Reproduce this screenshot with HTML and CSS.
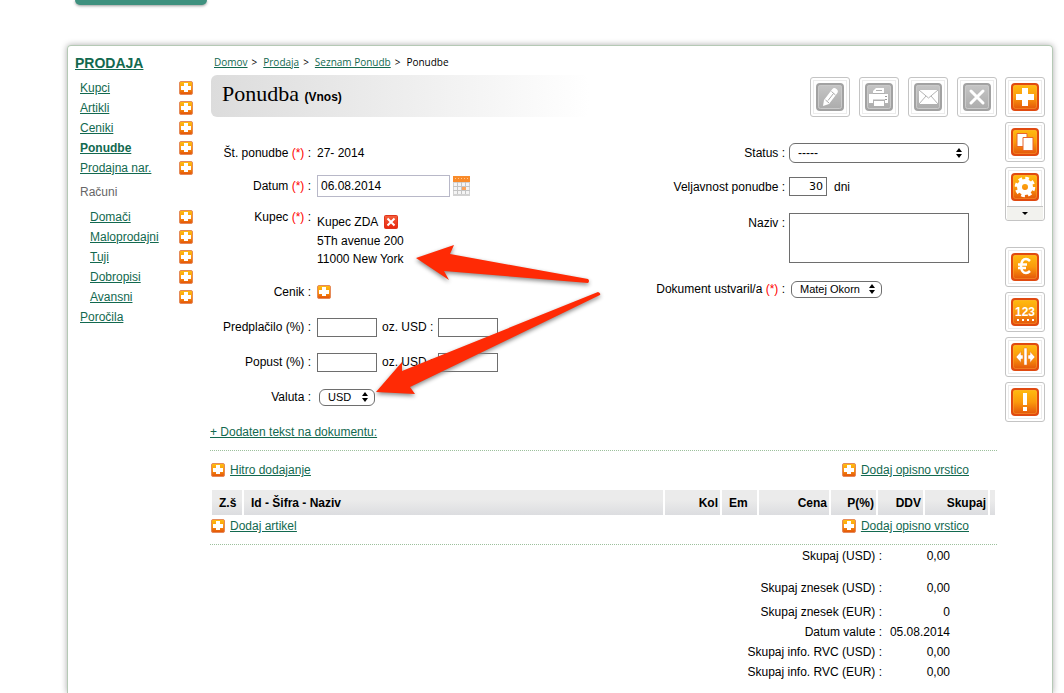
FILE: index.html
```html
<!DOCTYPE html>
<html lang="sl">
<head>
  <meta charset="UTF-8">
  <title>Ponudba (Vnos)</title>
  <link rel="stylesheet" href="styles.css">
</head>
<body>

  <!-- shared icons -->
  <svg class="defs" width="0" height="0" aria-hidden="true">
    <defs>
      <linearGradient id="orange" x1="0" y1="0" x2="0" y2="1">
        <stop offset="0" stop-color="#ffbe10"/>
        <stop offset="0.5" stop-color="#fb9a0c"/>
        <stop offset="1" stop-color="#e2500a"/>
      </linearGradient>
      <linearGradient id="gray" x1="0" y1="0" x2="0" y2="1">
        <stop offset="0" stop-color="#c6c6c6"/>
        <stop offset="1" stop-color="#ababab"/>
      </linearGradient>
      <linearGradient id="red" x1="0" y1="0" x2="0" y2="1">
        <stop offset="0" stop-color="#f4603c"/>
        <stop offset="1" stop-color="#e8260c"/>
      </linearGradient>
    </defs>
    <symbol id="plus" viewBox="0 0 14 14">
      <rect x="0.5" y="0.5" width="13" height="13" rx="1.5" fill="url(#orange)" stroke="#e58a5a"/>
      <path d="M5 2h4v3h3v4H9v2H5V9H2V5h3z" fill="#fff"/>
    </symbol>
    <symbol id="tile" viewBox="0 0 28 28">
      <rect x="1" y="1" width="26" height="26" rx="3" fill="url(#orange)" stroke="#e04a10" stroke-width="2"/>
      <rect x="2.5" y="2.5" width="23" height="23" rx="2" fill="none" stroke="#ffae3c" stroke-opacity="0.4"/>
    </symbol>
    <symbol id="tile-gray" viewBox="0 0 28 28">
      <rect x="1" y="1" width="26" height="26" rx="3" fill="url(#gray)" stroke="#a2a2a2" stroke-width="2"/>
      <rect x="2.5" y="2.5" width="23" height="23" rx="2" fill="none" stroke="#cacaca"/>
    </symbol>
  </svg>

  <div class="top-tab"></div>

  <div class="card">

    <nav class="sidebar">
      <h2><a href="#">PRODAJA</a></h2>
      <ul>
        <li><a href="#">Kupci</a><a href="#" class="add" aria-label="Dodaj"><svg class="plus"><use href="#plus"/></svg></a></li>
        <li><a href="#">Artikli</a><a href="#" class="add" aria-label="Dodaj"><svg class="plus"><use href="#plus"/></svg></a></li>
        <li><a href="#">Ceniki</a><a href="#" class="add" aria-label="Dodaj"><svg class="plus"><use href="#plus"/></svg></a></li>
        <li><a href="#" class="active">Ponudbe</a><a href="#" class="add" aria-label="Dodaj"><svg class="plus"><use href="#plus"/></svg></a></li>
        <li><a href="#">Prodajna nar.</a><a href="#" class="add" aria-label="Dodaj"><svg class="plus"><use href="#plus"/></svg></a></li>
      </ul>
      <h3>Računi</h3>
      <ul class="sub">
        <li><a href="#">Domači</a><a href="#" class="add" aria-label="Dodaj"><svg class="plus"><use href="#plus"/></svg></a></li>
        <li><a href="#">Maloprodajni</a><a href="#" class="add" aria-label="Dodaj"><svg class="plus"><use href="#plus"/></svg></a></li>
        <li><a href="#">Tuji</a><a href="#" class="add" aria-label="Dodaj"><svg class="plus"><use href="#plus"/></svg></a></li>
        <li><a href="#">Dobropisi</a><a href="#" class="add" aria-label="Dodaj"><svg class="plus"><use href="#plus"/></svg></a></li>
        <li><a href="#">Avansni</a><a href="#" class="add" aria-label="Dodaj"><svg class="plus"><use href="#plus"/></svg></a></li>
      </ul>
      <ul>
        <li><a href="#">Poročila</a></li>
      </ul>
    </nav>

    <main>
      <div class="breadcrumb">
        <a href="#">Domov</a><span>&gt;</span><a href="#">Prodaja</a><span>&gt;</span><a href="#">Seznam Ponudb</a><span>&gt;</span>Ponudbe
      </div>

      <header>
        <h1>Ponudba <small>(Vnos)</small></h1>
        <div class="actions">
          <button type="button" class="tool" aria-label="Uredi">
            <svg viewBox="0 0 28 28"><use href="#tile-gray"/>
              <path d="M7 23l1-6L16 6.500Q18 4 20.500 6T21 10.500L13 21z" fill="#fff"/>
              <path d="M9.500 17l3.500 3M15.500 8.500l4 3.500M12 17.500l5.500-7" stroke="#aaa" fill="none"/>
            </svg>
          </button>
          <button type="button" class="tool" aria-label="Natisni">
            <svg viewBox="0 0 28 28"><use href="#tile-gray"/>
              <path d="M8 10V8l3-3h8v5z" fill="#fff"/>
              <path d="M4 11h19v9h-3v-3H8v3H4z" fill="#fff"/>
              <path d="M9 18h10v5H9z" fill="#fff"/>
              <path d="M8 10.500h12M8 17h12M11 7.500h6" stroke="#b0b0b0"/>
              <path d="M21 13v1M21 16v1" stroke="#999" stroke-width="2"/>
            </svg>
          </button>
          <button type="button" class="tool" aria-label="Pošlji">
            <svg viewBox="0 0 28 28"><use href="#tile-gray"/>
              <rect x="5" y="7" width="19" height="14" fill="#fff"/>
              <path d="M5 7l9.500 8L24 7M5 21l7-8M24 21l-7-8" stroke="#b4b4b4" fill="none"/>
            </svg>
          </button>
          <button type="button" class="tool" aria-label="Zapri">
            <svg viewBox="0 0 28 28"><use href="#tile-gray"/>
              <path d="M8 8l12 12M20 8L8 20" stroke="#fff" stroke-width="3" stroke-linecap="round"/>
            </svg>
          </button>
        </div>
      </header>

      <form class="form" onsubmit="return false">
        <div class="col left">
          <div class="row number">
            <span class="label">Št. ponudbe <i>(*)</i> :</span>
            <span>27- 2014</span>
          </div>
          <div class="row date">
            <label for="datum">Datum <i>(*)</i> :</label>
            <input type="text" id="datum" value="06.08.2014">
            <button type="button" class="icon-btn" aria-label="Koledar">
              <svg width="17" height="20" viewBox="0 0 17 20">
                <rect width="17" height="20" fill="#d2d2d2"/>
                <path d="M1 7h15v11H1z" fill="#f4f4f4"/>
                <path d="M0 10.500h17M0 14.500h17M4.500 6v12M8.500 6v12M12.500 6v12" stroke="#c4c4c4"/>
                <rect width="17" height="6" fill="#f98b2a"/>
                <path d="M2 2.500h14" stroke="#ffc890" stroke-dasharray="1 2"/>
                <rect x="9" y="11" width="4" height="3" fill="#fca55c"/>
              </svg>
            </button>
          </div>
          <div class="row customer">
            <span class="label">Kupec <i>(*)</i> :</span>
            <div class="address">
              <div class="name">Kupec ZDA
                <button type="button" class="icon-btn" aria-label="Odstrani">
                  <svg width="14" height="14" viewBox="0 0 14 14">
                    <rect x="0.5" y="0.5" width="13" height="13" rx="1" fill="url(#red)" stroke="#e0341c"/>
                    <path d="M3.500 3.500l7 7M10.500 3.500l-7 7" stroke="#fff" stroke-width="2"/>
                  </svg>
                </button>
              </div>
              <div>5Th avenue 200</div>
              <div>11000 New York</div>
            </div>
          </div>
          <div class="row pricelist">
            <span class="label">Cenik :</span>
            <button type="button" class="icon-btn" aria-label="Dodaj cenik"><svg class="plus"><use href="#plus"/></svg></button>
          </div>
          <div class="row">
            <label for="predplacilo">Predplačilo (%) :</label>
            <input type="text" id="predplacilo" class="amount">
            <label for="predplacilo-usd" class="unit">oz. USD :</label>
            <input type="text" id="predplacilo-usd" class="amount">
          </div>
          <div class="row">
            <label for="popust">Popust (%) :</label>
            <input type="text" id="popust" class="amount">
            <label for="popust-usd" class="unit">oz. USD :</label>
            <input type="text" id="popust-usd" class="amount">
          </div>
          <div class="row">
            <label for="valuta">Valuta :</label>
            <select id="valuta" class="small-select currency">
              <option>USD</option>
              <option>EUR</option>
            </select>
          </div>
        </div>

        <div class="col right">
          <div class="row">
            <label for="status">Status :</label>
            <select id="status" class="status">
              <option>-----</option>
            </select>
          </div>
          <div class="row validity">
            <label for="veljavnost">Veljavnost ponudbe :</label>
            <div class="field">
              <input type="text" id="veljavnost" class="days" value="30">
              <span>dni</span>
            </div>
          </div>
          <div class="row title">
            <label for="naziv">Naziv :</label>
            <textarea id="naziv"></textarea>
          </div>
          <div class="row">
            <label for="ustvaril">Dokument ustvaril/a <i>(*)</i> :</label>
            <div class="field">
              <select id="ustvaril" class="small-select author">
                <option>Matej Okorn</option>
              </select>
            </div>
          </div>
        </div>

        <svg class="arrows" viewBox="0 0 200 160" width="200" height="160" aria-hidden="true">
          <path d="M6 18L44 5 40 14 178 39Q180 41 178 43L34 31 39 40z"/>
          <path d="M-34 152L-8 122V131L188 52Q191 53 190 55L0 147 5 154z"/>
        </svg>
      </form>

      <a href="#" class="extra-text">+ Dodaten tekst na dokumentu:</a>

      <section class="items">
        <div class="links">
          <a href="#"><svg class="plus"><use href="#plus"/></svg><span>Hitro dodajanje</span></a>
          <a href="#"><svg class="plus"><use href="#plus"/></svg><span>Dodaj opisno vrstico</span></a>
        </div>
        <table class="list">
          <thead>
            <tr>
              <th class="c-no">Z.š</th>
              <th>Id - Šifra - Naziv</th>
              <th class="c-qty num">Kol</th>
              <th class="c-unit">Em</th>
              <th class="c-price num">Cena</th>
              <th class="c-pct num">P(%)</th>
              <th class="c-pct num">DDV</th>
              <th class="c-sum num">Skupaj</th>
              <th class="c-end"></th>
            </tr>
          </thead>
        </table>
        <div class="links bottom">
          <a href="#"><svg class="plus"><use href="#plus"/></svg><span>Dodaj artikel</span></a>
          <a href="#"><svg class="plus"><use href="#plus"/></svg><span>Dodaj opisno vrstico</span></a>
        </div>
      </section>

      <table class="totals">
        <tr><th>Skupaj (USD) :</th><td>0,00</td></tr>
        <tr class="space-l"><th>Skupaj znesek (USD) :</th><td>0,00</td></tr>
        <tr class="space-s"><th>Skupaj znesek (EUR) :</th><td>0</td></tr>
        <tr><th>Datum valute :</th><td>05.08.2014</td></tr>
        <tr><th>Skupaj info. RVC (USD) :</th><td>0,00</td></tr>
        <tr><th>Skupaj info. RVC (EUR) :</th><td>0,00</td></tr>
      </table>
    </main>

    <aside class="toolbar">
      <div class="group">
        <button type="button" class="tool" aria-label="Nova ponudba">
          <svg viewBox="0 0 28 28"><use href="#tile"/>
            <path d="M11 5h6v6h6v6h-6v6h-6v-6H5v-6h6z" fill="#fff"/>
          </svg>
        </button>
        <button type="button" class="tool" aria-label="Kopiraj">
          <svg viewBox="0 0 28 28"><use href="#tile"/>
            <path d="M6 5.500h10v13H6z" fill="#fff" stroke="#e8662a"/>
            <path d="M12 9.500h10v13H12z" fill="#fff" stroke="#e8662a"/>
          </svg>
        </button>
        <button type="button" class="tool with-menu" aria-label="Nastavitve">
          <svg viewBox="0 0 28 28"><use href="#tile"/>
            <circle cx="14" cy="14" r="5.500" fill="none" stroke="#fff" stroke-width="5"/>
            <circle cx="14" cy="14" r="8.500" fill="none" stroke="#fff" stroke-width="3.500" stroke-dasharray="3.600 3.075"/>
          </svg>
          <span class="menu"></span>
        </button>
      </div>
      <div class="group">
        <button type="button" class="tool" aria-label="Valuta">
          <svg viewBox="0 0 28 28"><use href="#tile"/>
            <path d="M19 8Q17 6 15 6 10.500 6 10 13 10.500 20 15 20 17 20 19 18M7 11.500h9M7 15h8" fill="none" stroke="#fff" stroke-width="2.500"/>
          </svg>
        </button>
        <button type="button" class="tool" aria-label="Številčenje">
          <svg viewBox="0 0 28 28"><use href="#tile"/>
            <text x="14" y="18" class="digits">123</text>
            <path d="M6 22h18" stroke="#fff" stroke-width="2" stroke-dasharray="2 3"/>
          </svg>
        </button>
        <button type="button" class="tool" aria-label="Razdeli">
          <svg viewBox="0 0 28 28"><use href="#tile"/>
            <path d="M13 5h3v17h-3zM5 14l5-5.500v3.500h2v4h-2v3.500zM24 14l-5-5.500v3.500h-2v4h2v3.500z" fill="#fff" stroke="#e8762a" stroke-width="0.500"/>
          </svg>
        </button>
        <button type="button" class="tool" aria-label="Opozorilo">
          <svg viewBox="0 0 28 28"><use href="#tile"/>
            <path d="M12 5h4v12h-4zM12 19h4v4h-4z" fill="#fff"/>
          </svg>
        </button>
      </div>
    </aside>

  </div>

</body>
</html>
```

FILE: styles.css
```css
* {
  box-sizing: border-box;
}
body {
  margin: 0;
  min-height: 100vh;
  display: flex;
  flex-direction: column;
  background: #fff;
  color: #000;
  font-family: "Liberation Sans", Arial, sans-serif;
  font-size: 12px;
  line-height: 20px;
}
a {
  color: #12694f;
}
svg {
  display: block;
}
.defs {
  position: absolute;
}
.plus {
  width: 14px;
  height: 14px;
}
button {
  font: inherit;
  padding: 0;
  cursor: pointer;
}
input, select, textarea {
  font-family: inherit;
  font-size: 12px;
  color: #000;
  background: #fff;
  border: 1px solid #6e6e6e;
  border-radius: 0;
  margin: 0;
  padding: 0 3px;
}
.icon-btn {
  border: none;
  background: none;
}

.top-tab {
  width: 132px;
  height: 5px;
  margin: 0 0 40px 75px;
  background: #3f917f;
  border-radius: 0 0 10px 10px;
  box-shadow: 0 1px 3px #999;
}
.card {
  flex: 1;
  display: flex;
  margin: 0 11px 0 67px;
  padding-right: 7px;
  border: 1px solid #b5c9b5;
  border-bottom: none;
  border-radius: 4px 4px 0 0;
  box-shadow: 0 0 6px #aaa;
}

/* left menu */
.sidebar {
  flex: 0 0 142px;
  padding: 7px 17px 0 7px;
}
.sidebar h2 {
  margin: 0 0 5px;
  font-size: 14px;
  line-height: 20px;
}
.sidebar h3 {
  margin: 4px 0 5px 5px;
  font-size: 12px;
  font-weight: normal;
  color: #666;
}
.sidebar ul {
  list-style: none;
  margin: 0;
  padding: 0 0 0 5px;
}
.sidebar ul.sub {
  padding-left: 15px;
}
.sidebar li {
  display: flex;
  align-items: center;
  justify-content: space-between;
}
.sidebar .active {
  font-weight: bold;
}

/* content */
main {
  flex: 1;
  min-width: 0;
  padding-top: 9px;
}
.breadcrumb {
  padding-left: 4px;
  font-family: "Open Sans", sans-serif;
  font-size: 10px;
  line-height: 14px;
}
.breadcrumb span {
  margin: 0 6px 0 4px;
}
header {
  display: flex;
  justify-content: space-between;
  align-items: flex-end;
  margin-top: 6px;
}
h1 {
  flex: 0 0 48%;
  height: 42px;
  margin: 0 0 0 1px;
  padding-left: 11px;
  font-family: "Liberation Serif", serif;
  font-size: 22px;
  font-weight: normal;
  line-height: 38px;
  background: linear-gradient(90deg, #dcdcdc, #fff);
  border-radius: 6px;
}
h1 small {
  font-family: "Liberation Sans", Arial, sans-serif;
  font-size: 12px;
  font-weight: bold;
}
.actions {
  display: flex;
  gap: 9px;
}
.tool {
  width: 40px;
  height: 40px;
  padding: 0 5px;
  background: #fff;
  border: 1px solid #c4c4c4;
  border-radius: 3px;
  box-shadow: inset 0 0 0 2px #fff, inset 0 0 0 3px #ececec;
}
.tool svg {
  width: 28px;
  height: 28px;
}

/* form */
.form {
  position: relative;
  display: flex;
  justify-content: space-between;
  margin-top: 26px;
  padding-right: 28px;
}
.row {
  display: flex;
  align-items: center;
  margin-bottom: 15px;
}
.row i {
  color: #f00;
  font-style: normal;
}
.left .row > :first-child {
  flex: 0 0 101px;
  margin-right: 6px;
  text-align: right;
}
.row input {
  height: 19px;
}
.left .number {
  margin-bottom: 12px;
}
.left .date {
  margin-bottom: 10px;
}
.row.date input {
  width: 133px;
  height: 22px;
  margin-right: 3px;
  border-color: #b8b8c8;
}
.left .customer {
  align-items: flex-start;
  margin-bottom: 14px;
}
.address {
  padding-top: 5px;
  line-height: 18px;
}
.address .name {
  display: flex;
  gap: 6px;
  align-items: center;
  line-height: 20px;
}
.amount {
  width: 60px;
}
.unit {
  margin: 0 5px;
}
select {
  appearance: none;
  height: 20px;
  padding: 0 8px;
  border-radius: 6px;
  background: #fff url("data:image/svg+xml,%3Csvg xmlns='http://www.w3.org/2000/svg' width='6' height='10'%3E%3Cpath d='M3 0l3 4H0zM3 10L0 6h6z'/%3E%3C/svg%3E") no-repeat right 6px center;
}
.small-select {
  height: 17px;
  font-size: 11px;
  margin-left: 2px;
}
.currency {
  width: 56px;
}
.author {
  width: 91px;
}
.right .row {
  justify-content: flex-end;
  margin-bottom: 14px;
}
.right label {
  margin-right: 4px;
}
.status, .field, textarea {
  width: 180px;
}
.field {
  display: flex;
  gap: 7px;
}
.row .days {
  width: 38px;
  font-family: "DejaVu Sans", sans-serif;
  font-size: 11px;
  text-align: right;
}
.right .validity {
  margin-bottom: 16px;
}
.right .title {
  align-items: flex-start;
  margin-bottom: 16px;
}
textarea {
  height: 50px;
  resize: none;
}
.arrows {
  position: absolute;
  left: 200px;
  top: 97px;
  overflow: visible;
  fill: #ff2a05;
  filter: drop-shadow(0 2px 2px #888);
  pointer-events: none;
}

.extra-text {
  display: inline-block;
}

/* document lines */
.items {
  margin-top: 8px;
  border-top: 1px dotted #9cc09c;
  border-bottom: 1px dotted #9cc09c;
}
.links {
  display: flex;
  justify-content: space-between;
  padding: 9px 28px 10px 1px;
}
.links.bottom {
  padding-top: 1px;
  padding-bottom: 8px;
}
.links a {
  display: flex;
  align-items: center;
  gap: 5px;
}
.links span {
  text-decoration: underline;
}
.list {
  width: 100%;
  table-layout: fixed;
  border-collapse: separate;
  border-spacing: 2px 0;
}
.list th {
  height: 25px;
  padding: 0 7px;
  text-align: left;
  background: linear-gradient(#ebebeb 40%, #dcdde0);
}
.list th.num {
  padding: 0 2px;
  text-align: right;
}
.list .c-no { width: 30px; }
.list .c-qty { width: 55px; }
.list .c-unit { width: 35px; }
.list .c-price { width: 70px; }
.list .c-pct { width: 45px; }
.list .c-sum { width: 63px; }
.list .c-end { width: 5px; padding: 0; }

.totals {
  margin: 1px 47px 0 auto;
  border-collapse: collapse;
}
.totals th, .totals td {
  padding: 0;
  font-weight: normal;
  text-align: right;
}
.totals td {
  min-width: 68px;
  padding-left: 6px;
}
.totals .space-l > * {
  padding-top: 12px;
}
.totals .space-s > * {
  padding-top: 4px;
}

/* right toolbar */
.toolbar {
  flex: 0 0 40px;
  margin-left: 8px;
  padding-top: 31px;
}
.group {
  display: flex;
  flex-direction: column;
  gap: 5px;
  margin-bottom: 26px;
}
.with-menu {
  height: 54px;
}
.menu {
  display: block;
  height: 14px;
  margin: 5px -4px -4px;
  border-top: 1px solid #c4c4c4;
  background: #f2f2ee;
}
.menu::after {
  content: "";
  display: block;
  width: 0;
  margin: 5px auto 0;
  border: 3px solid transparent;
  border-top-color: #000;
  border-bottom: none;
}
.digits {
  font-family: "Liberation Sans", Arial, sans-serif;
  font-size: 12px;
  font-weight: bold;
  fill: #fff;
  text-anchor: middle;
}
```
